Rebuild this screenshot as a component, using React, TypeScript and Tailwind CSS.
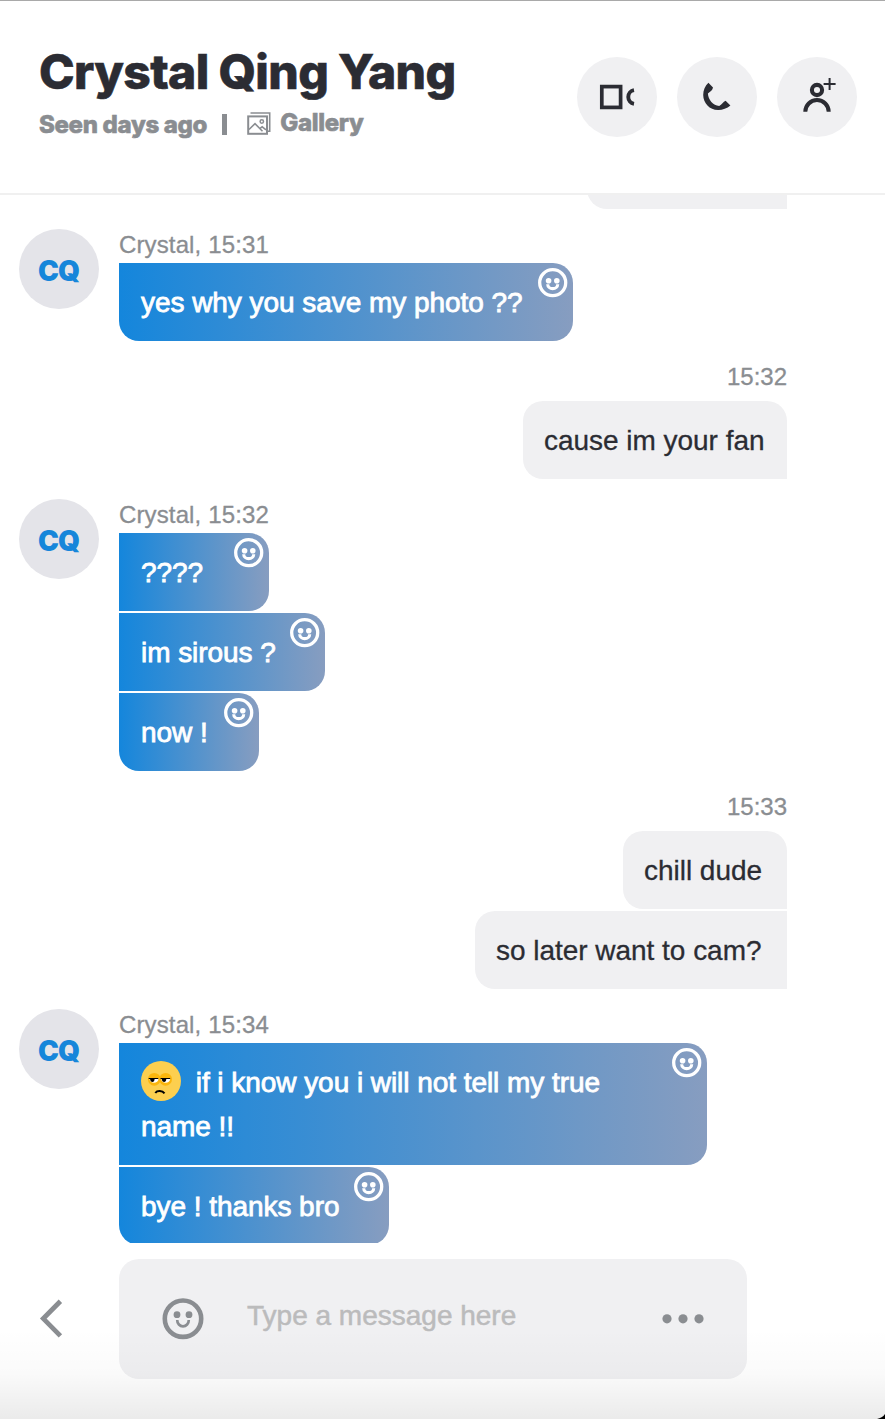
import { ReactNode } from 'react';
import clsx from 'clsx';

interface Message {
  id: string;
  text: string;
  width: string;
  emoji?: boolean;
}

interface MessageGroup {
  id: string;
  from: 'them' | 'me';
  time: string;
  messages: Message[];
}

const GROUPS: MessageGroup[] = [
  {
    id: 'g1',
    from: 'them',
    time: '15:31',
    messages: [{ id: 'm1', text: 'yes why you save my photo ??', width: 'w-[454px]' }],
  },
  {
    id: 'g2',
    from: 'me',
    time: '15:32',
    messages: [{ id: 'm2', text: 'cause im your fan', width: 'w-[264px]' }],
  },
  {
    id: 'g3',
    from: 'them',
    time: '15:32',
    messages: [
      { id: 'm3', text: '????', width: 'w-[150px]' },
      { id: 'm4', text: 'im sirous ?', width: 'w-[206px]' },
      { id: 'm5', text: 'now !', width: 'w-[140px]' },
    ],
  },
  {
    id: 'g4',
    from: 'me',
    time: '15:33',
    messages: [
      { id: 'm6', text: 'chill dude', width: 'w-[164px]' },
      { id: 'm7', text: 'so later want to cam?', width: 'w-[312px]' },
    ],
  },
  {
    id: 'g5',
    from: 'them',
    time: '15:34',
    messages: [
      { id: 'm8', text: 'if i know you i will not tell my true name !!', width: 'w-[588px]', emoji: true },
      { id: 'm9', text: 'bye ! thanks bro', width: 'w-[270px]' },
    ],
  },
];

function GalleryIcon() {
  return (
    <svg width="24" height="23" viewBox="0 0 24 23" fill="none" stroke="currentColor">
      <path d="M3.5 1h19.2v18.2H20" strokeWidth="1.6" />
      <rect x="1.2" y="4.4" width="18.8" height="17.4" strokeWidth="2" />
      <path d="M2 17.500 8 11.700l7.500 7.500M13 16.400l2.200-1.600 3.800 3" strokeWidth="1.600" />
      <circle cx="14.800" cy="9.500" r="1.700" strokeWidth="1.500" />
    </svg>
  );
}

function VideoIcon() {
  return (
    <svg width="80" height="80" viewBox="0 0 80 80" fill="none" stroke="currentColor">
      <rect x="24.8" y="29.6" width="18.8" height="20.8" strokeWidth="3.7" />
      <path d="M57 33.2a6.9 6.9 0 0 0 0 13.6" strokeWidth="3.9" />
    </svg>
  );
}

function PhoneIcon() {
  return (
    <svg width="80" height="80" viewBox="0 0 80 80" fill="currentColor">
      <path d="M31.4 25.8 36 30.6c-.4 2.3-2.4 4.2-5.1 5.8.3 6.3 5.2 11.9 11.3 12.5 2.6-1.3 4-4.3 6.4-5.2l4.8 4.9c-3.5 2.9-8 4.600-12.400 4.500C32.600 52.900 26.300 46.300 26.200 38c0-4.700 1.900-9.300 5.200-12.200Z" />
    </svg>
  );
}

function AddPersonIcon() {
  return (
    <svg width="80" height="80" viewBox="0 0 80 80" fill="none" stroke="currentColor">
      <circle cx="40" cy="33" r="5.1" strokeWidth="4.1" />
      <path d="M28.3 54.8a11.7 11.7 0 0 1 23.4 0" strokeWidth="4" />
      <path d="M52.6 21v12M46.6 27h12" strokeWidth="2" />
    </svg>
  );
}

function ReactIcon() {
  return (
    <svg className="absolute top-[5px] right-[5.5px]" width="30" height="30" viewBox="0 0 30 30" fill="none" stroke="white">
      <circle cx="14.7" cy="14.7" r="13" strokeWidth="3.3" />
      <circle cx="10.6" cy="12.7" r="2.8" fill="white" stroke="none" />
      <circle cx="18.8" cy="12.7" r="2.8" fill="white" stroke="none" />
      <path d="M9.7 16.2a5 4.4 0 0 0 10 0" strokeWidth="3.1" />
    </svg>
  );
}

function SmileIcon() {
  return (
    <svg width="42" height="42" viewBox="0 0 42 42" fill="none" stroke="currentColor">
      <circle cx="21" cy="20.7" r="18.2" strokeWidth="4.6" />
      <circle cx="15" cy="16.7" r="3.4" fill="currentColor" stroke="none" />
      <circle cx="27" cy="16.7" r="3.4" fill="currentColor" stroke="none" />
      <path d="M15.2 22a5.8 6.4 0 0 0 11.6 0" strokeWidth="2.7" />
    </svg>
  );
}

function UnamusedEmoji() {
  return (
    <svg className="mr-[7px] inline-block -translate-y-1 align-middle" width="40" height="40" viewBox="0 0 40 40">
      <circle cx="20" cy="20" r="20" fill="#fccf4f" />
      <circle cx="13.3" cy="18.3" r="6.4" fill="#fbb60d" />
      <circle cx="24.6" cy="18.3" r="6.4" fill="#fbb60d" />
      <path d="M8.5 17.5h9c0 5.800-9 5.800-9 0ZM20.200 17.500h9c0 5.800-9 5.800-9 0Z" fill="white" />
      <path d="M9 17.500h4.600c.2 4.800-4.400 4.800-4.600 0ZM20.700 17.500h4.600c.2 4.800-4.400 4.800-4.600 0Z" fill="black" />
      <path d="M7.7 17.5h9.6M19.5 17.5h9.7" stroke="black" strokeWidth="1" />
      <path d="M14.3 32c1.8-2.6 7-2.600 9.200.4" fill="none" stroke="black" strokeWidth="2" />
    </svg>
  );
}

function RoundButton({ label, children }: { label: string; children: ReactNode }) {
  return (
    <button aria-label={label} className="size-20 rounded-full bg-[#f0f0f2] text-[#2b2c33]">
      {children}
    </button>
  );
}

function Header() {
  return (
    <header className="flex h-[195px] shrink-0 justify-between border-t border-b-2 border-t-[#a9a9a9] border-b-[#f0f0f0] pr-7 pl-[39px]">
      <div className="pt-[42px] font-[Inter,sans-serif] font-extrabold">
        <h1 className="text-[48px] leading-[58px] tracking-[-0.65px] whitespace-nowrap text-[#2b2c33] [-webkit-text-stroke:0.6px_#2b2c33]">
          Crystal Qing Yang
        </h1>
        <div className="mt-2 flex h-8 items-center text-2xl leading-8 tracking-[-0.32px] whitespace-nowrap text-[#8a8d91] [-webkit-text-stroke:0.6px_#8a8d91]">
          <span>Seen days ago</span>
          <span className="-mt-0.5 ml-[15px] h-[21px] w-[5px] bg-[#8a8d91]" />
          <span className="-mt-1 mr-[9px] ml-5">
            <GalleryIcon />
          </span>
          <span className="-mt-1">Gallery</span>
        </div>
      </div>
      <div className="flex gap-5 pt-14">
        <RoundButton label="Video call">
          <VideoIcon />
        </RoundButton>
        <RoundButton label="Call">
          <PhoneIcon />
        </RoundButton>
        <RoundButton label="Add people">
          <AddPersonIcon />
        </RoundButton>
      </div>
    </header>
  );
}

function IncomingGroup({ group }: { group: MessageGroup }) {
  const last = group.messages.length - 1;

  return (
    <section className="flex gap-5 pl-[19px]">
      <div className="flex size-20 items-center justify-center rounded-full bg-[#e4e4e9] pt-1 pr-px font-[Inter,sans-serif] text-[28px] font-black tracking-[-1px] text-[#1686da]">
        CQ
      </div>
      <div>
        <div className="h-[34px] text-2xl leading-8 tracking-[0.13px] text-[#8a8d91] [-webkit-text-stroke:0.3px_#8a8d91]">
          Crystal, {group.time}
        </div>
        <div className="flex flex-col gap-0.5">
          {group.messages.map((m, i) => (
            <div
              key={m.id}
              className={clsx(
                'relative rounded-r-[20px] bg-linear-to-r/srgb from-[#1486dc] to-[#879dc0] pt-[18px] pr-12 pb-4 pl-[22px] text-[28px] leading-[44px] tracking-[-0.05px] text-white [-webkit-text-stroke:0.8px_white]',
                m.width,
                i === last && 'rounded-bl-[20px]',
              )}
            >
              {m.emoji && (
                <>
                  <UnamusedEmoji />{' '}
                </>
              )}
              {m.text}
              <ReactIcon />
            </div>
          ))}
        </div>
      </div>
    </section>
  );
}

function OutgoingGroup({ group }: { group: MessageGroup }) {
  return (
    <section className="flex flex-col items-end pr-[98px]">
      <div className="h-10 text-2xl leading-8 text-[#8a8d91] [-webkit-text-stroke:0.3px_#8a8d91]">{group.time}</div>
      <div className="flex flex-col items-end gap-0.5">
        {group.messages.map((m, i) => (
          <div
            key={m.id}
            className={clsx(
              'rounded-l-[20px] bg-[#f0f0f2] pt-[18px] pb-4 pl-[21px] text-[28px] leading-[44px] tracking-[-0.03px] whitespace-nowrap text-[#2b2c33] [-webkit-text-stroke:0.3px_#2b2c33]',
              m.width,
              i === 0 && 'rounded-tr-[20px]',
            )}
          >
            {m.text}
          </div>
        ))}
      </div>
    </section>
  );
}

function Composer() {
  return (
    <footer className="flex h-44 shrink-0 pt-4">
      <button aria-label="Back" className="flex h-[120px] w-[119px] items-center pl-[39px] text-[#8a8d91]">
        <svg width="24" height="40" viewBox="0 0 24 40" fill="none" stroke="currentColor" strokeWidth="4.8">
          <path d="M21.4 2.300 4.300 19.600l17.100 17.300" />
        </svg>
      </button>
      <div className="flex h-[120px] w-[628px] items-center rounded-[20px] bg-[#f0f0f2] px-[43px] text-[#8a8d91]">
        <SmileIcon />
        <span className="-mt-1.5 ml-[43px] grow text-[28px] leading-[44px] text-[#bbbbbc] [-webkit-text-stroke:0.5px_#bbbbbc]">
          Type a message here
        </span>
        <svg width="42" height="10" viewBox="0 0 42 10" fill="currentColor">
          <circle cx="5" cy="4.8" r="4.6" />
          <circle cx="21" cy="4.8" r="4.6" />
          <circle cx="37" cy="4.8" r="4.6" />
        </svg>
      </div>
    </footer>
  );
}

export default function App() {
  return (
    <div className="relative flex h-[1419px] w-[885px] flex-col overflow-hidden bg-white font-['Liberation_Sans',Arial,sans-serif]">
      <Header />
      <main className="flex h-[1048px] shrink-0 flex-col gap-5 overflow-hidden">
        <div className="-mt-16 mr-[98px] h-[78px] w-[200px] shrink-0 self-end rounded-l-[20px] bg-[#f0f0f2]" />
        {GROUPS.map((g) =>
          g.from === 'them' ? <IncomingGroup key={g.id} group={g} /> : <OutgoingGroup key={g.id} group={g} />,
        )}
      </main>
      <Composer />
      {/* bottom shade and the window's rounded corner */}
      <div className="pointer-events-none absolute inset-x-0 bottom-0 h-[90px] bg-linear-to-b from-black/0 via-black/2 to-black/8" />
      <svg className="absolute right-0 bottom-0" width="8" height="5" viewBox="0 0 8 5">
        <path d="M8 0v5H0c3.500-.6 6-2.200 8-5Z" fill="black" />
      </svg>
    </div>
  );
}
